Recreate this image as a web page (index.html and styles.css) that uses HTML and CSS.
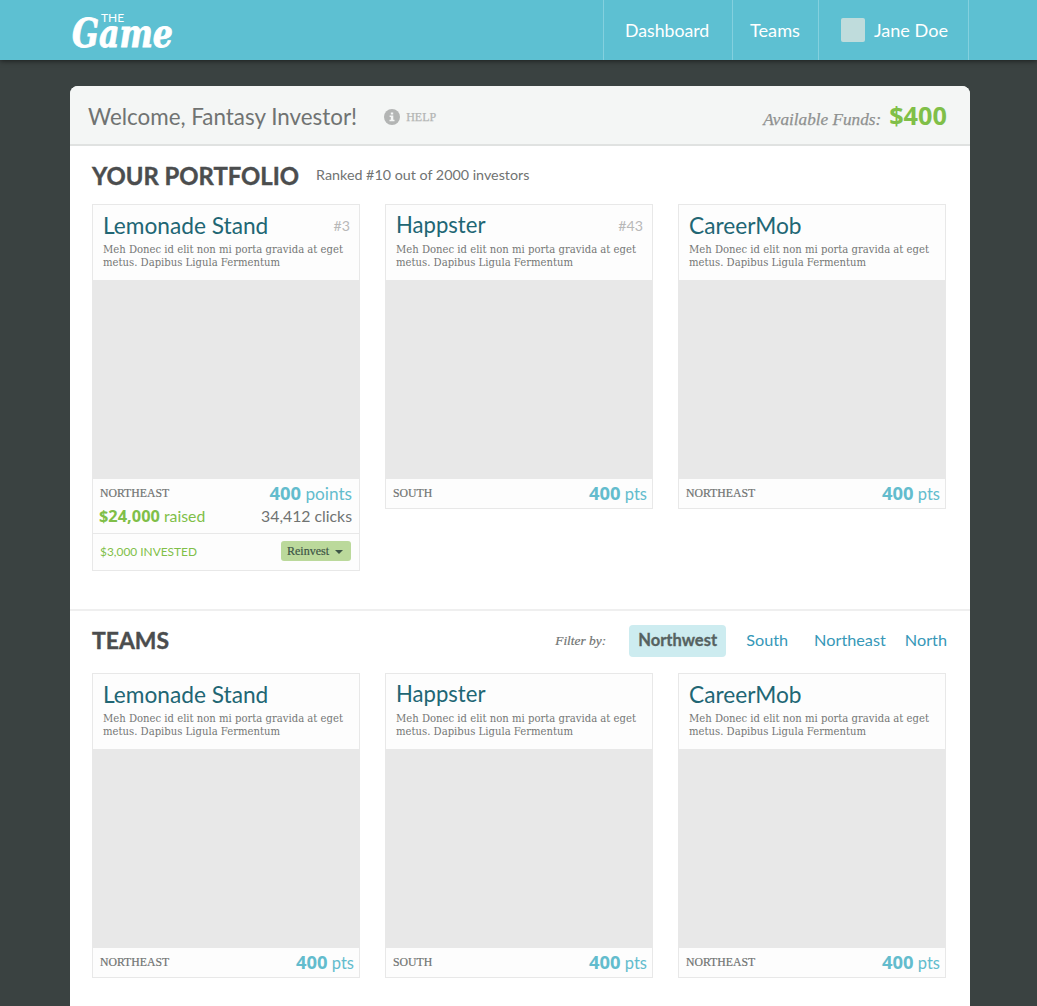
FILE: index.html
```
<!DOCTYPE html>
<html lang="en">
<head>
<meta charset="utf-8">
<title>The Game</title>
<link rel="stylesheet" href="styles.css">
</head>
<body>
<header class="topbar">
  <div class="topbar-inner">
    <a class="logo"><span class="logo-main">Game</span><span class="logo-the">THE</span></a>
    <nav class="nav">
      <a class="nav-item nav-dashboard">Dashboard</a>
      <a class="nav-item nav-teams">Teams</a>
      <a class="nav-item nav-user"><span class="avatar"></span>Jane Doe</a>
    </nav>
  </div>
</header>
<main class="page">
  <div class="welcome">
    <h1 class="welcome-title">Welcome, Fantasy Investor!</h1>
    <a class="help">
      <svg class="help-icon" viewBox="0 0 16 16" width="16" height="16"><circle cx="8" cy="8" r="8" fill="#b3b5b4"/><path d="M6.8 3.6h2.4v2H6.8zM5.6 6.6h3.7v4.2h1.2v1.4H5.5v-1.4h1.3V8H5.6z" fill="#f4f6f5"/></svg>
      <span>HELP</span>
    </a>
    <div class="funds"><em>Available Funds:</em><strong>$400</strong></div>
  </div>

  <section class="section portfolio">
    <div class="section-head">
      <h2 class="section-title title-portfolio">YOUR PORTFOLIO</h2>
      <span class="rank">Ranked #10 out of 2000 investors</span>
    </div>
    <div class="cards">
      <article class="card">
        <div class="card-head">
          <div class="card-top"><h3>Lemonade Stand</h3><span class="place">#3</span></div>
          <p>Meh Donec id elit non mi porta gravida at eget<br>metus. Dapibus Ligula Fermentum</p>
        </div>
        <div class="card-image"></div>
        <div class="card-row"><span class="region">NORTHEAST</span><span class="points points-long"><b>400</b> points</span></div>
        <div class="card-stats"><span class="raised"><b>$24,000</b> raised</span><span class="clicks">34,412 clicks</span></div>
        <div class="card-invest">
          <span class="invested">$3,000 INVESTED</span>
          <button class="reinvest">Reinvest<span class="caret"></span></button>
        </div>
      </article>
      <article class="card">
        <div class="card-head">
          <div class="card-top"><h3 class="tight">Happster</h3><span class="place">#43</span></div>
          <p>Meh Donec id elit non mi porta gravida at eget<br>metus. Dapibus Ligula Fermentum</p>
        </div>
        <div class="card-image"></div>
        <div class="card-row"><span class="region">SOUTH</span><span class="points"><b>400</b> pts</span></div>
      </article>
      <article class="card">
        <div class="card-head">
          <div class="card-top"><h3>CareerMob</h3></div>
          <p>Meh Donec id elit non mi porta gravida at eget<br>metus. Dapibus Ligula Fermentum</p>
        </div>
        <div class="card-image"></div>
        <div class="card-row"><span class="region">NORTHEAST</span><span class="points"><b>400</b> pts</span></div>
      </article>
    </div>
  </section>

  <section class="section teams">
    <div class="section-head">
      <h2 class="section-title title-teams">TEAMS</h2>
      <div class="filters">
        <em>Filter by:</em>
        <a class="filter active">Northwest</a>
        <a class="filter filter-south">South</a>
        <a class="filter filter-northeast">Northeast</a>
        <a class="filter filter-north">North</a>
      </div>
    </div>
    <div class="cards">
      <article class="card">
        <div class="card-head">
          <div class="card-top"><h3>Lemonade Stand</h3></div>
          <p>Meh Donec id elit non mi porta gravida at eget<br>metus. Dapibus Ligula Fermentum</p>
        </div>
        <div class="card-image"></div>
        <div class="card-row"><span class="region">NORTHEAST</span><span class="points"><b>400</b> pts</span></div>
      </article>
      <article class="card">
        <div class="card-head">
          <div class="card-top"><h3 class="tight">Happster</h3></div>
          <p>Meh Donec id elit non mi porta gravida at eget<br>metus. Dapibus Ligula Fermentum</p>
        </div>
        <div class="card-image"></div>
        <div class="card-row"><span class="region">SOUTH</span><span class="points"><b>400</b> pts</span></div>
      </article>
      <article class="card">
        <div class="card-head">
          <div class="card-top"><h3>CareerMob</h3></div>
          <p>Meh Donec id elit non mi porta gravida at eget<br>metus. Dapibus Ligula Fermentum</p>
        </div>
        <div class="card-image"></div>
        <div class="card-row"><span class="region">NORTHEAST</span><span class="points"><b>400</b> pts</span></div>
      </article>
    </div>
  </section>
</main>
</body>
</html>
```
FILE: styles.css
```
* { box-sizing: border-box; }
html { height: 100%; overflow: hidden; }
body {
  margin: 0;
  height: 1006px;
  overflow: hidden;
  background: #3a4241;
  color: #707372;
  font-family: Lato, sans-serif;
  display: flex;
  flex-direction: column;
}
h1, h2, h3, p { margin: 0; font-weight: 400; }

.topbar {
  flex: none;
  height: 60px;
  background: #5dc0d2;
  box-shadow: 0 1px 5px rgba(0, 0, 0, .55);
}
.topbar-inner {
  width: 900px;
  height: 60px;
  margin-left: 70px;
  display: flex;
  justify-content: space-between;
}
.logo { position: relative; width: 110px; height: 60px; color: #fff; }
.logo-main {
  position: absolute;
  left: 2px;
  top: 9px;
  font: italic bold 39px/48px "DejaVu Serif Condensed", "DejaVu Serif", serif;
  font-stretch: condensed;
  -webkit-text-stroke: .8px #fff;
  transform: scaleX(.9);
  transform-origin: 0 0;
}
.logo-the { position: absolute; left: 31px; top: 11px; font-size: 12px; line-height: 14px; }

.nav { display: flex; margin-right: 1px; color: #fff; }
.nav-item { display: flex; align-items: center; border-left: 1px solid #84d0de; }
.nav-dashboard { width: 129px; padding-left: 21px; font-size: 17.7px; }
.nav-teams { width: 86px; padding-left: 17px; font-size: 18.2px; }
.nav-user { width: 151px; padding-left: 22px; border-right: 1px solid #84d0de; font-size: 18.1px; }
.avatar { width: 24px; height: 24px; margin-right: 9px; border-radius: 2px; background: #bfdcdc; }

.page {
  flex: none;
  width: 900px;
  height: 940px;
  margin: 26px 0 0 70px;
  background: #fff;
  border-radius: 8px 8px 0 0;
  overflow: hidden;
}
.welcome {
  height: 60px;
  padding: 0 23px 0 18px;
  display: flex;
  align-items: center;
  background: #f4f6f5;
  border-bottom: 2px solid #e0e2e1;
}
.welcome-title { font-size: 22.4px; line-height: 30px; padding-top: 3px; }
.help {
  display: flex;
  align-items: center;
  gap: 6px;
  margin: 3px 0 0 27px;
  color: #b3b5b4;
  font: 12px/16px "Liberation Serif", serif;
  -webkit-text-stroke: .25px #b3b5b4;
}
.help-icon { display: block; -webkit-text-stroke: 0; }
.funds { margin-left: auto; display: flex; align-items: baseline; gap: 8px; padding-top: 2px; }
.funds em { font: italic 17.2px/24px "Liberation Serif", serif; color: #8f9190; -webkit-text-stroke: .25px #8f9190; }
.funds strong { font: bold 25.3px/30px "Open Sans", sans-serif; color: #80bf48; }

.section { padding: 0 22px; }
.section-head { display: flex; align-items: center; }
.section-title { color: #4b4d4e; font-weight: 700; -webkit-text-stroke: .4px #4b4d4e; }
.title-portfolio { font-size: 23.85px; padding-top: 1px; }
.title-teams { font-size: 22.9px; padding-bottom: 3px; }
.portfolio { height: 465px; border-bottom: 2px solid #efefef; }
.portfolio .section-head { height: 58px; }
.rank { margin-left: 17px; padding-bottom: 2px; font-size: 14.3px; }
.teams .section-head { height: 60px; margin-bottom: 2px; }

.cards { display: grid; grid-template-columns: repeat(3, 268px); column-gap: 25px; align-items: start; }
.card { border: 1px solid #e8e8e8; background: #fdfdfd; }
.card-head { height: 75px; padding: 7px 9px 0 10px; }
.card-top { display: flex; justify-content: space-between; align-items: center; height: 28px; }
.card-top h3 { font-size: 22.7px; line-height: 28px; padding-bottom: 1px; color: #216674; }
.card-top h3.tight { font-size: 22.1px; padding-bottom: 2px; }
.place { font-size: 14.2px; padding-bottom: 2px; color: #b8b8b8; }
.card-head p {
  margin-top: 3px;
  font: 11.2px/13px "DejaVu Serif Condensed", "DejaVu Serif", serif;
  font-stretch: condensed;
  color: #757776;
  white-space: nowrap;
}
.card-image { height: 199px; margin: 0 -1px; background: #e8e8e8; }
.card-row { height: 29px; padding: 0 5px 0 7px; display: flex; align-items: center; justify-content: space-between; }
.region { font: 11.75px/14px "Liberation Serif", serif; color: #707372; padding-top: 1px; -webkit-text-stroke: .2px #707372; }
.points { font-size: 16.5px; line-height: 24px; color: #63bccd; padding-bottom: 1px; }
.points b { font: bold 18.4px/24px "Open Sans", sans-serif; }
.points-long { font-size: 17.2px; padding-right: 2px; }
.card-stats { height: 25px; padding: 0 7px 9px 6px; display: flex; align-items: center; justify-content: space-between; font-size: 15.8px; line-height: 20px; }
.raised { color: #80bf48; }
.raised b { font: bold 16.4px/20px "Open Sans", sans-serif; }
.card-invest {
  height: 37px;
  padding: 0 8px 2px 7px;
  display: flex;
  align-items: center;
  justify-content: space-between;
  border-top: 1px solid #e8e8e8;
}
.invested { font-size: 11.9px; color: #80bf48; }
.reinvest {
  width: 70px;
  height: 20px;
  padding: 0 0 0 6px;
  display: flex;
  align-items: center;
  gap: 6px;
  border: 0;
  border-radius: 3px;
  background: #bbd99b;
  color: #3d5546;
  font: 12px/20px "Liberation Serif", serif;
  -webkit-text-stroke: .2px #3d5546;
}
.caret { border: 4px solid transparent; border-top-color: #3d5546; border-bottom: 0; margin-top: 2px; }

.filters { margin-left: auto; display: flex; align-items: center; color: #3698b8; font-size: 16.25px; }
.filters em { margin-right: 23px; padding-bottom: 1px; font: italic 13.4px/18px "Liberation Serif", serif; color: #707372; -webkit-text-stroke: .2px #707372; }
.filter { padding-bottom: 4px; }
.filter.active {
  width: 97px;
  height: 32px;
  padding: 0;
  border-radius: 4px;
  background: #cdecf0;
  color: #566261;
  font-weight: 700;
  font-size: 16.5px;
  line-height: 31px;
  text-align: center;
  -webkit-text-stroke: .3px #566261;
}
.filter-south { margin-left: 20px; }
.filter-northeast { margin-left: 26px; }
.filter-north { margin: 0 1px 0 19px; }
```
